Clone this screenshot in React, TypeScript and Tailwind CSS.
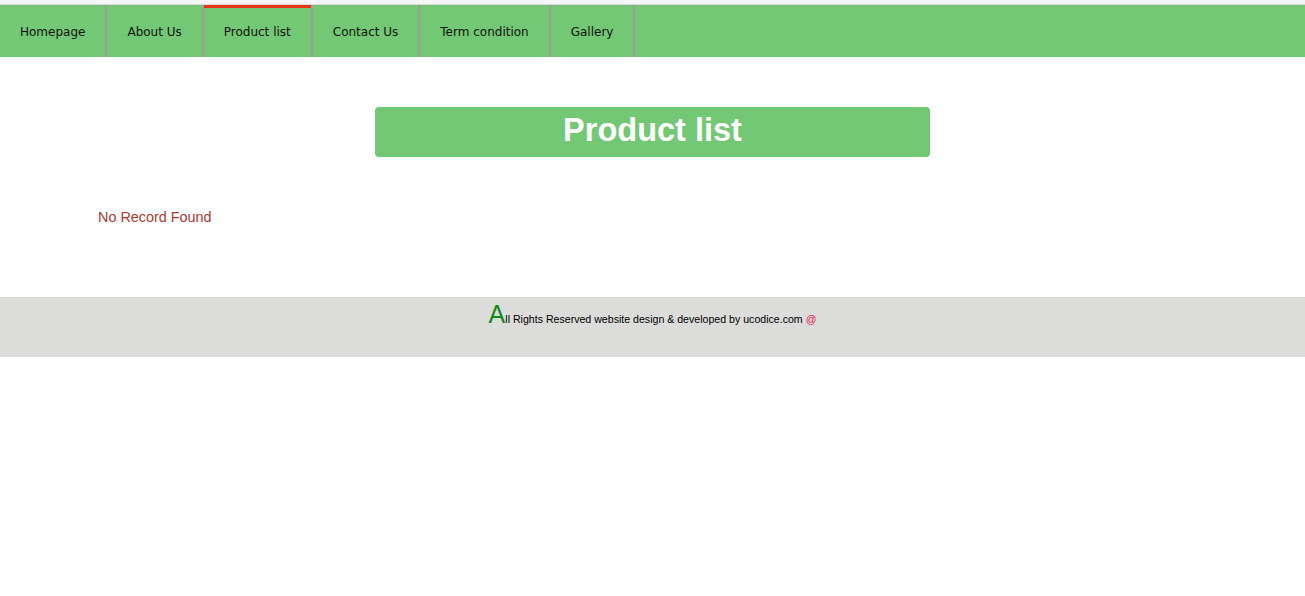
const navItems = ["Homepage", "About Us", "Product list", "Contact Us", "Term condition", "Gallery"];

export default function App() {
  return (
    <div className="min-h-[596px] bg-white font-['Liberation_Sans',Arial,sans-serif]">
      {/* top strip */}
      <div className="h-[5px] bg-[#f6f6f6] border-b border-[#d8d8d8]" />

      {/* menu */}
      <nav className="flex h-[52px] bg-[#72c874]">
        {navItems.map((item) => (
          <a
            key={item}
            href="#"
            className="relative flex items-center px-[20px] pt-[2px] border-r-2 border-[#a09c98] text-[12px] text-[#111] font-['DejaVu_Sans',sans-serif]"
          >
            {item === "Product list" && <span className="absolute left-0 right-0 top-0 h-[3px] bg-[#e8351a]" />}
            {item}
          </a>
        ))}
      </nav>

      {/* content */}
      <div className="pt-[50px] pb-[71px]">
        <h1 className="mx-auto w-[555px] h-[50px] pb-[3px] rounded bg-[#72c874] flex items-center justify-center text-white font-bold text-[32.5px]">
          Product list
        </h1>
        <p className="mt-[51px] ml-[98px] text-[14.4px] text-[#b0392e] leading-[18px]">No Record Found</p>
      </div>

      {/* footer */}
      <footer className="h-[60px] bg-[#dcdcda] flex justify-center pt-[5px]">
        <p className="text-[10.6px] text-black leading-none flex items-baseline h-fit">
          <span className="text-[25px] text-[#11881a] leading-none">A</span>
          ll Rights Reserved website design &amp; developed by ucodice.com&nbsp;
          <span className="text-[#e8204a]">@</span>
        </p>
      </footer>
    </div>
  );
}
